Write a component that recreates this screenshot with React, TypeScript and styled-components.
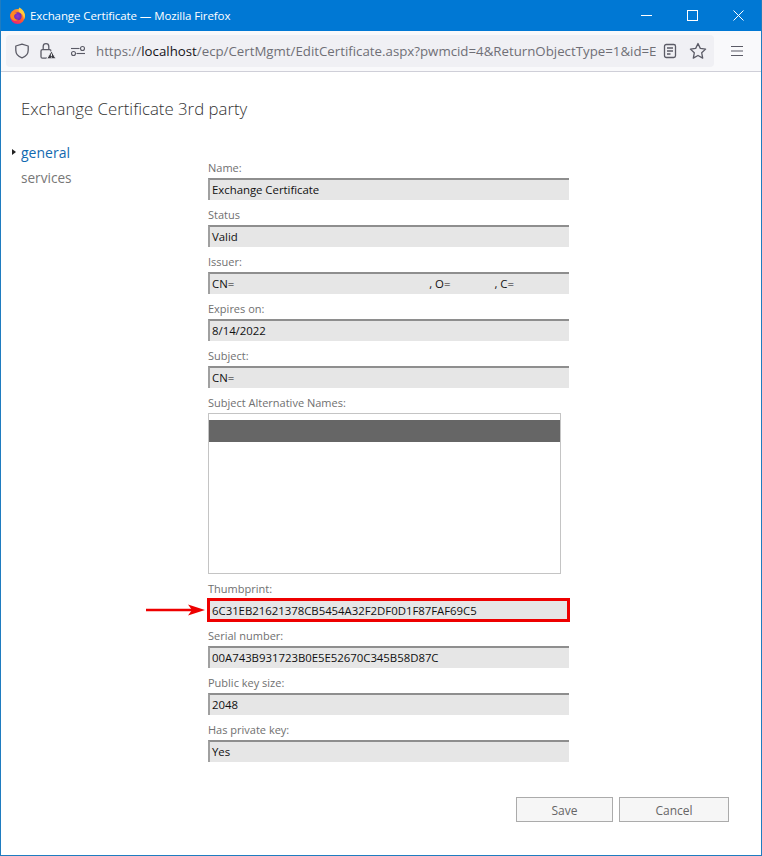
import React from "react";
import styled, {createGlobalStyle} from "styled-components";

const GlobalStyle = createGlobalStyle`
    html, body {
        margin: 0;
        padding: 0;
        background: #ffffff;
    }
`;

const uiFont = `"Open Sans", "Noto Sans", "Liberation Sans", sans-serif`;

const Window = styled.div`
    display: flex;
    flex-direction: column;
    box-sizing: border-box;
    width: 762px;
    height: 856px;
    overflow: hidden;
    border: 1px solid #1f7cc0;
    border-top: 0;
    font-family: ${uiFont};
`;

const TitleBar = styled.div`
    display: flex;
    align-items: center;
    flex: 0 0 31px;
    margin: 0 -1px;
    padding: 0 1px 0 9px;
    background: #0078d4;
    color: #ffffff;
`;

const WindowTitle = styled.span`
    flex: 1;
    margin-left: 4px;
    font-size: 11.5px;
    letter-spacing: -0.09px;
`;

const WindowButton = styled.div`
    display: flex;
    align-items: center;
    justify-content: center;
    width: 46px;
    height: 31px;
`;

const Toolbar = styled.div`
    display: flex;
    align-items: center;
    flex: 0 0 40px;
    background: #f9f9fb;
    border-bottom: 1px solid #cfcfd8;
    padding-left: 5px;
`;

const UrlBar = styled.div`
    display: flex;
    align-items: center;
    box-sizing: border-box;
    width: 708px;
    height: 32px;
    padding-left: 5px;
    background: #f0f0f4;
    border-radius: 4px;
`;

const ToolIcon = styled.div<{$width: number}>`
    display: flex;
    align-items: center;
    justify-content: center;
    flex: 0 0 ${p => p.$width}px;
`;

const UrlText = styled.div`
    flex: 0 0 564px;
    box-sizing: border-box;
    padding-left: 4px;
    overflow: hidden;
    white-space: nowrap;
    font-size: 13.28px;
    color: #6f6f76;
    b {
        font-weight: 400;
        color: #15141a;
    }
`;

const Page = styled.div`
    flex: 1;
    display: flex;
    flex-direction: column;
    background: #ffffff;
`;

const PageTitle = styled.h1`
    margin: 25px 0 0 20px;
    height: 47px;
    font-size: 16.8px;
    line-height: 24px;
    font-weight: 300;
    color: #333333;
`;

const Body = styled.div`
    display: flex;
`;

const SideNav = styled.nav`
    flex: 0 0 207px;
    padding-left: 20px;
    box-sizing: border-box;
    margin-top: -4px;
`;

const NavItem = styled.div<{$active?: boolean}>`
    position: relative;
    height: 25px;
    line-height: 25px;
    font-size: ${p => (p.$active ? "14px" : "13.6px")};
    color: ${p => (p.$active ? "#1269b0" : "#777777")};
`;

const NavMarker = styled.span`
    position: absolute;
    left: -9px;
    top: 9px;
    border-left: 4px solid #222222;
    border-top: 3.5px solid transparent;
    border-bottom: 3.5px solid transparent;
`;

const Form = styled.div`
    display: flex;
    flex-direction: column;
    margin-top: 9px;
`;

const FieldLabel = styled.div`
    height: 25px;
    line-height: 18px;
    padding-top: 6px;
    box-sizing: border-box;
    font-size: 11px;
    color: #707070;
`;

const Field = styled.div`
    position: relative;
`;

const ReadOnlyValue = styled.div<{$marked?: boolean}>`
    display: flex;
    align-items: center;
    box-sizing: border-box;
    width: 361px;
    height: 22px;
    padding: 0 0 2px 2px;
    background: #e6e6e6;
    border-top: 2px solid #8e8e8e;
    border-left: 2px solid #a0a0a0;
    font-size: 11.4px;
    letter-spacing: -0.025px;
    color: #111111;
    white-space: pre;
    ${p => p.$marked && `
        outline: 3px solid #ee0000;
        outline-offset: -2px;
    `}
`;

const IssuerPart = styled.span<{$left: number}>`
    margin-left: ${p => p.$left}px;
`;

const NamesList = styled.div`
    box-sizing: border-box;
    width: 353px;
    height: 161px;
    padding-top: 6px;
    background: #ffffff;
    border: 1px solid #c4c4c4;
`;

const SelectedName = styled.div`
    height: 22px;
    background: #666666;
`;

const PointerArrow = styled.svg`
    position: absolute;
    left: -62px;
    top: 30px;
`;

const Footer = styled.div`
    display: flex;
    justify-content: flex-end;
    gap: 6px;
    margin-top: 35px;
    padding-right: 32px;
`;

const FooterButton = styled.button<{$width: number}>`
    box-sizing: border-box;
    width: ${p => p.$width}px;
    height: 25px;
    padding: 1px 0 0;
    background: #f6f6f6;
    border: 1px solid #ababab;
    font-family: ${uiFont};
    font-size: 12px;
    color: #666666;
`;

const FirefoxLogo: React.FC = () => (
    <svg width="17" height="17" viewBox="0 0 17 17">
        <defs>
            <linearGradient id="ffBody" x1="0.8" y1="0" x2="0.2" y2="1">
                <stop offset="0" stopColor="#ffb02e" />
                <stop offset="0.55" stopColor="#ff5a2c" />
                <stop offset="1" stopColor="#e31587" />
            </linearGradient>
            <radialGradient id="ffGlobe" cx="0.5" cy="0.5" r="0.5">
                <stop offset="0" stopColor="#8b3ed0" />
                <stop offset="1" stopColor="#6a2bb8" />
            </radialGradient>
        </defs>
        <circle cx="8.5" cy="9.5" r="7.4" fill="url(#ffBody)" />
        <circle cx="8.6" cy="9.2" r="4" fill="url(#ffGlobe)" />
        <path d="M10.4 .6c2.6 1.4 4.8 3.7 5.4 6.6.4 2-.1 3.8-1 5.2.2-2.6-.9-5-3.1-6.2-.9-.6-1.8-1.2-2-2.4-.2-1.2 0-2.3.7-3.2z" fill="#ffcb3d" />
        <path d="M1.4 7.6C2 5.4 3.4 4 5 3.4c-.3.9-.1 1.5.5 1.9 1 .2 2 .3 2.6.9-1.3.3-2.8 1.2-3 2.9-.2 2.2 1.7 3.9 4 3.7-1.8 1.5-5.2 1.2-6.9-1.4-.7-1.1-1-2.6-.8-3.8z" fill="#ff8a1f" />
    </svg>
);

const ShieldIcon: React.FC = () => (
    <svg width="16" height="16" viewBox="0 0 16 16" fill="none" stroke="#5b5b66" strokeWidth="1.3">
        <path d="M8 1.2 14.2 3v4.2c0 3.7-2.6 6.3-6.2 7.6C4.4 13.5 1.8 10.9 1.8 7.2V3z" strokeLinejoin="round" />
    </svg>
);

const LockWarningIcon: React.FC = () => (
    <svg width="18" height="18" viewBox="0 0 18 18" fill="none">
        <rect x="2" y="7.6" width="10" height="8.6" rx="1.5" stroke="#5b5b66" strokeWidth="1.3" />
        <path d="M4.2 7.6V4.5a2.8 2.8 0 0 1 5.6 0v3.1" stroke="#5b5b66" strokeWidth="1.3" />
        <path d="M12.4 8.8 17 16.8H7.8z" fill="#3c3c44" stroke="#f0f0f4" strokeWidth="1" strokeLinejoin="round" />
        <path d="M12.4 11.6v2.400M12.4 14.800v.8" stroke="#ffffff" strokeWidth="1" />
    </svg>
);

const PermissionsIcon: React.FC = () => (
    <svg width="16" height="16" viewBox="0 0 16 16" fill="none" stroke="#5b5b66" strokeWidth="1.1">
        <path d="M1 5.5h8.500" />
        <circle cx="12.5" cy="5.5" r="2" />
        <circle cx="3.5" cy="10.5" r="2" />
        <path d="M6.5 10.5h8.500" />
    </svg>
);

const ReaderIcon: React.FC = () => (
    <svg width="14" height="16" viewBox="0 0 14 16" fill="none" stroke="#5b5b66" strokeWidth="1.3">
        <rect x="1.5" y="1.5" width="11" height="13" rx="1.8" />
        <path d="M4 5h6M4 8h6M4 11h3.500" />
    </svg>
);

const StarIcon: React.FC = () => (
    <svg width="18" height="18" viewBox="0 0 18 18" fill="none" stroke="#5b5b66" strokeWidth="1.3" strokeLinejoin="round">
        <path d="M9 1.5l2.3 4.900 5.300.7-3.900 3.700 1 5.300L9 13.500l-4.700 2.600 1-5.300-3.900-3.700 5.300-.7z" />
    </svg>
);

const MenuIcon: React.FC = () => (
    <svg width="14" height="12" viewBox="0 0 14 12" stroke="#5b5b66" strokeWidth="1.2">
        <path d="M1 1.5h12M1 6h12M1 10.500h12" />
    </svg>
);

const fieldsAbove = [
    {label: "Name:", value: "Exchange Certificate"},
    {label: "Status", value: "Valid"},
];

const fieldsBelow = [
    {label: "Serial number:", value: "00A743B931723B0E5E52670C345B58D87C"},
    {label: "Public key size:", value: "2048"},
    {label: "Has private key:", value: "Yes"},
];

export default function App() {
    return (
        <Window>
            <GlobalStyle />

            <TitleBar>
                <FirefoxLogo />
                <WindowTitle>Exchange Certificate — Mozilla Firefox</WindowTitle>
                <WindowButton>
                    <svg width="11" height="11" viewBox="0 0 11 11" stroke="#ffffff">
                        <path d="M0 5.5h11" />
                    </svg>
                </WindowButton>
                <WindowButton>
                    <svg width="11" height="11" viewBox="0 0 11 11" fill="none" stroke="#ffffff">
                        <rect x=".5" y=".5" width="10" height="10" />
                    </svg>
                </WindowButton>
                <WindowButton>
                    <svg width="11" height="11" viewBox="0 0 11 11" stroke="#ffffff">
                        <path d="M.5.5l10 10M10.5.5l-10 10" />
                    </svg>
                </WindowButton>
            </TitleBar>

            <Toolbar>
                <UrlBar>
                    <ToolIcon $width={21}><ShieldIcon /></ToolIcon>
                    <ToolIcon $width={32}><LockWarningIcon /></ToolIcon>
                    <ToolIcon $width={28}><PermissionsIcon /></ToolIcon>
                    <UrlText>
                        https://<b>localhost</b>/ecp/CertMgmt/EditCertificate.aspx?pwmcid=4&amp;ReturnObjectType=1&amp;id=E
                    </UrlText>
                    <ToolIcon $width={28}><ReaderIcon /></ToolIcon>
                    <ToolIcon $width={28}><StarIcon /></ToolIcon>
                </UrlBar>
                <ToolIcon $width={46}><MenuIcon /></ToolIcon>
            </Toolbar>

            <Page>
                <PageTitle>Exchange Certificate 3rd party</PageTitle>

                <Body>
                    <SideNav>
                        <NavItem $active><NavMarker />general</NavItem>
                        <NavItem>services</NavItem>
                    </SideNav>

                    <Form>
                        {fieldsAbove.map(f => (
                            <Field key={f.label}>
                                <FieldLabel>{f.label}</FieldLabel>
                                <ReadOnlyValue>{f.value}</ReadOnlyValue>
                            </Field>
                        ))}

                        <Field>
                            <FieldLabel>Issuer:</FieldLabel>
                            <ReadOnlyValue>
                                CN=
                                <IssuerPart $left={195}>, O=</IssuerPart>
                                <IssuerPart $left={44}>, C=</IssuerPart>
                            </ReadOnlyValue>
                        </Field>

                        <Field>
                            <FieldLabel>Expires on:</FieldLabel>
                            <ReadOnlyValue>8/14/2022</ReadOnlyValue>
                        </Field>

                        <Field>
                            <FieldLabel>Subject:</FieldLabel>
                            <ReadOnlyValue>CN=</ReadOnlyValue>
                        </Field>

                        <Field>
                            <FieldLabel>Subject Alternative Names:</FieldLabel>
                            <NamesList>
                                <SelectedName />
                            </NamesList>
                        </Field>

                        <Field>
                            <FieldLabel>Thumbprint:</FieldLabel>
                            <PointerArrow width="60" height="12" viewBox="0 0 60 12">
                                <path d="M0 4.7h46V7.3H0z" fill="#ee0000" />
                                <path d="M42 .5 59 6 42 11.5 46 6z" fill="#ee0000" />
                            </PointerArrow>
                            <ReadOnlyValue $marked>6C31EB21621378CB5454A32F2DF0D1F87FAF69C5</ReadOnlyValue>
                        </Field>

                        {fieldsBelow.map(f => (
                            <Field key={f.label}>
                                <FieldLabel>{f.label}</FieldLabel>
                                <ReadOnlyValue>{f.value}</ReadOnlyValue>
                            </Field>
                        ))}
                    </Form>
                </Body>

                <Footer>
                    <FooterButton $width={97}>Save</FooterButton>
                    <FooterButton $width={110}>Cancel</FooterButton>
                </Footer>
            </Page>
        </Window>
    );
}
